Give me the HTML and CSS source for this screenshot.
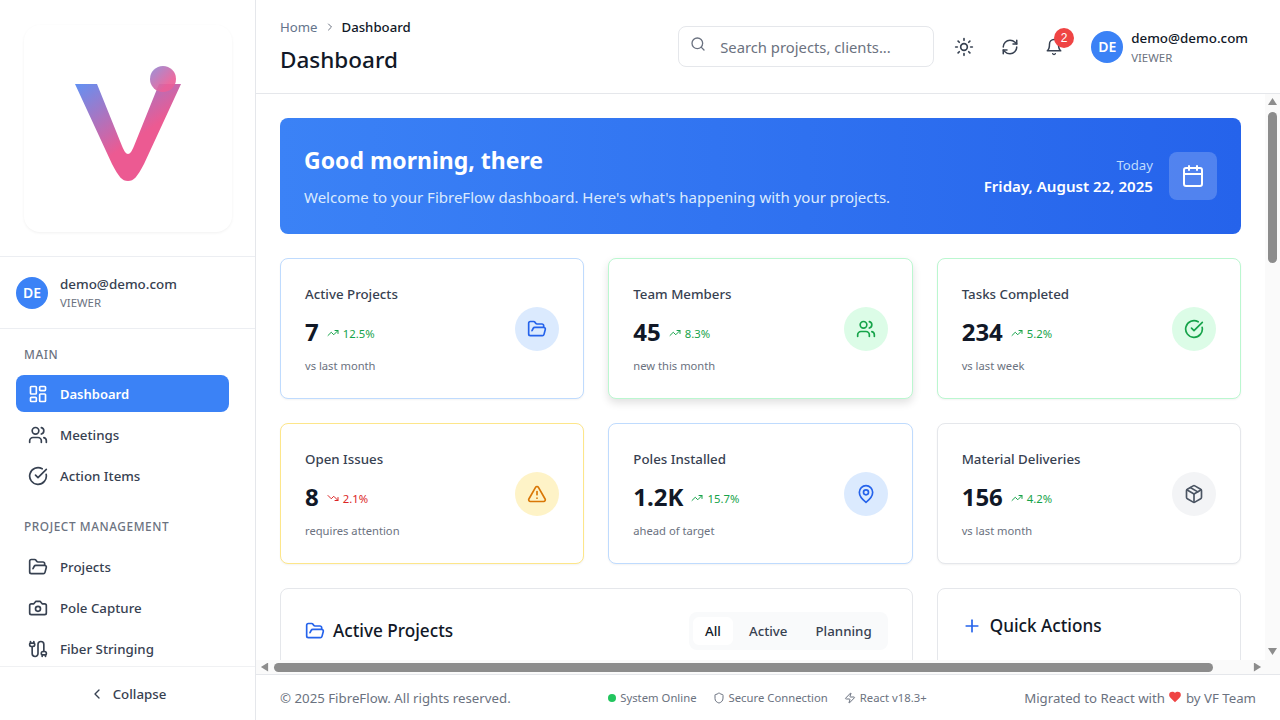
FILE: index.html
```html
<!DOCTYPE html>
<html lang="en">
<head>
    <meta charset="UTF-8">
    <meta name="viewport" content="width=device-width, initial-scale=1.0">
    <title>FibreFlow - Dashboard</title>
    <link rel="stylesheet" href="styles.css">
</head>
<body>
    <!-- iconos -->
    <svg class="sprite" xmlns="http://www.w3.org/2000/svg">
        <symbol id="i-dashboard" viewBox="0 0 24 24"><rect x="3" y="3" width="7" height="9" rx="1"/><rect x="14" y="3" width="7" height="5" rx="1"/><rect x="14" y="12" width="7" height="9" rx="1"/><rect x="3" y="16" width="7" height="5" rx="1"/></symbol>
        <symbol id="i-users" viewBox="0 0 24 24"><path d="M16 21v-2a4 4 0 0 0-4-4H6a4 4 0 0 0-4 4v2"/><circle cx="9" cy="7" r="4"/><path d="M22 21v-2a4 4 0 0 0-3-3.87"/><path d="M16 3.13a4 4 0 0 1 0 7.75"/></symbol>
        <symbol id="i-check" viewBox="0 0 24 24"><path d="M21.801 10A10 10 0 1 1 17 3.335"/><path d="m9 11 3 3L22 4"/></symbol>
        <symbol id="i-folder" viewBox="0 0 24 24"><path d="m6 14 1.5-2.9A2 2 0 0 1 9.24 10H20a2 2 0 0 1 1.94 2.5l-1.54 6a2 2 0 0 1-1.95 1.5H4a2 2 0 0 1-2-2V5a2 2 0 0 1 2-2h3.9a2 2 0 0 1 1.69.9l.81 1.2a2 2 0 0 0 1.67.9H18a2 2 0 0 1 2 2v2"/></symbol>
        <symbol id="i-camera" viewBox="0 0 24 24"><path d="M14.5 4h-5L7 7H4a2 2 0 0 0-2 2v9a2 2 0 0 0 2 2h16a2 2 0 0 0 2-2V9a2 2 0 0 0-2-2h-3l-2.5-3z"/><circle cx="12" cy="13" r="3"/></symbol>
        <symbol id="i-cable" viewBox="0 0 24 24"><path d="M17 21v-2a1 1 0 0 1-1-1v-1a2 2 0 0 1 2-2h2a2 2 0 0 1 2 2v1a1 1 0 0 1-1 1"/><path d="M19 15V6.5a1 1 0 0 0-7 0v11a1 1 0 0 1-7 0V9"/><path d="M21 21v-2h-4"/><path d="M3 5h4V3"/><path d="M7 5a1 1 0 0 1 1 1v1a2 2 0 0 1-2 2H4a2 2 0 0 1-2-2V6a1 1 0 0 1 1-1V3"/></symbol>
        <symbol id="i-chevron" viewBox="0 0 24 24"><path d="m15 18-6-6 6-6"/></symbol>
        <symbol id="i-search" viewBox="0 0 24 24"><path d="m21 21-4.3-4.3"/><circle cx="11" cy="11" r="8"/></symbol>
        <symbol id="i-sun" viewBox="0 0 24 24"><circle cx="12" cy="12" r="4"/><path d="M12 2v2"/><path d="M12 20v2"/><path d="m4.93 4.93 1.41 1.41"/><path d="m17.66 17.66 1.41 1.41"/><path d="M2 12h2"/><path d="M20 12h2"/><path d="m6.34 17.66-1.41 1.41"/><path d="m19.07 4.93-1.41 1.41"/></symbol>
        <symbol id="i-refresh" viewBox="0 0 24 24"><path d="M3 12a9 9 0 0 1 9-9 9.75 9.75 0 0 1 6.74 2.74L21 8"/><path d="M21 3v5h-5"/><path d="M21 12a9 9 0 0 1-9 9 9.75 9.75 0 0 1-6.74-2.74L3 16"/><path d="M8 16H3v5"/></symbol>
        <symbol id="i-bell" viewBox="0 0 24 24"><path d="M6 8a6 6 0 0 1 12 0c0 7 3 9 3 9H3s3-2 3-9"/><path d="M10.3 21a1.94 1.94 0 0 0 3.4 0"/></symbol>
        <symbol id="i-up" viewBox="0 0 24 24"><polyline points="22 7 13.5 15.5 8.5 10.5 2 17"/><polyline points="16 7 22 7 22 13"/></symbol>
        <symbol id="i-down" viewBox="0 0 24 24"><polyline points="22 17 13.5 8.5 8.5 13.5 2 7"/><polyline points="16 17 22 17 22 11"/></symbol>
        <symbol id="i-alert" viewBox="0 0 24 24"><path d="m21.73 18-8-14a2 2 0 0 0-3.48 0l-8 14A2 2 0 0 0 4 21h16a2 2 0 0 0 1.73-3"/><path d="M12 9v4"/><path d="M12 17h.01"/></symbol>
        <symbol id="i-pin" viewBox="0 0 24 24"><path d="M20 10c0 6-8 12-8 12s-8-6-8-12a8 8 0 0 1 16 0Z"/><circle cx="12" cy="10" r="3"/></symbol>
        <symbol id="i-package" viewBox="0 0 24 24"><path d="m7.5 4.27 9 5.15"/><path d="M21 8a2 2 0 0 0-1-1.73l-7-4a2 2 0 0 0-2 0l-7 4A2 2 0 0 0 3 8v8a2 2 0 0 0 1 1.73l7 4a2 2 0 0 0 2 0l7-4A2 2 0 0 0 21 16Z"/><path d="m3.3 7 8.7 5 8.7-5"/><path d="M12 22V12"/></symbol>
        <symbol id="i-calendar" viewBox="0 0 24 24"><path d="M8 2v4"/><path d="M16 2v4"/><rect x="3" y="4" width="18" height="18" rx="2"/><path d="M3 10h18"/></symbol>
        <symbol id="i-plus" viewBox="0 0 24 24"><path d="M5 12h14"/><path d="M12 5v14"/></symbol>
        <symbol id="i-shield" viewBox="0 0 24 24"><path d="M20 13c0 5-3.5 7.5-7.66 8.95a1 1 0 0 1-.67-.01C7.5 20.5 4 18 4 13V6a1 1 0 0 1 1-1c2 0 4.5-1.2 6.24-2.72a1.17 1.17 0 0 1 1.52 0C14.51 3.81 17 5 19 5a1 1 0 0 1 1 1z"/></symbol>
        <symbol id="i-zap" viewBox="0 0 24 24"><path d="M4 14a1 1 0 0 1-.78-1.63l9.9-10.2a.5.5 0 0 1 .86.46l-1.92 6.02A1 1 0 0 0 13 10h7a1 1 0 0 1 .78 1.63l-9.9 10.2a.5.5 0 0 1-.86-.46l1.92-6.02A1 1 0 0 0 11 14z"/></symbol>
        <symbol id="i-heart" viewBox="0 0 24 24"><path d="M19 14c1.49-1.46 3-3.21 3-5.5A5.5 5.5 0 0 0 16.500 3c-1.760 0-3 .5-4.500 2-1.500-1.500-2.740-2-4.500-2A5.500 5.500 0 0 0 2 8.500c0 2.300 1.500 4.050 3 5.500l7 7Z"/></symbol>
    </svg>

    <div class="app">
        <aside class="sidebar">
            <div class="logo-area">
                <div class="logo-card">
                    <svg class="logo" viewBox="0 0 208 208" xmlns="http://www.w3.org/2000/svg">
                        <defs>
                            <linearGradient id="logo-grad" gradientUnits="userSpaceOnUse" x1="56" y1="58" x2="100" y2="122">
                                <stop offset="0" stop-color="#6590f1"/>
                                <stop offset="1" stop-color="#ec5a92"/>
                            </linearGradient>
                            <linearGradient id="dot-grad" x1="0" y1="0" x2="1" y2="1">
                                <stop offset="0" stop-color="#8d8bd8"/>
                                <stop offset="0.7" stop-color="#ea5f98"/>
                            </linearGradient>
                        </defs>
                        <path fill="url(#logo-grad)" d="M51 59H73L98 121C100 126 102 129 104 129C106 129 108 126 110 121L135 59H157L120 139C113 152 110 156 104 156C98 156 95 152 88 139Z"/>
                        <circle cx="139" cy="54" r="13" fill="url(#dot-grad)" opacity="0.92"/>
                    </svg>
                </div>
            </div>

            <div class="side-user">
                <div class="avatar">DE</div>
                <div class="user-text">
                    <div class="user-name">demo@demo.com</div>
                    <div class="user-role">VIEWER</div>
                </div>
            </div>

            <nav class="side-nav">
                <div class="nav-title">MAIN</div>
                <a class="nav-item active"><svg class="ico"><use href="#i-dashboard"/></svg>Dashboard</a>
                <a class="nav-item"><svg class="ico"><use href="#i-users"/></svg>Meetings</a>
                <a class="nav-item"><svg class="ico"><use href="#i-check"/></svg>Action Items</a>

                <div class="nav-title second">PROJECT MANAGEMENT</div>
                <a class="nav-item"><svg class="ico"><use href="#i-folder"/></svg>Projects</a>
                <a class="nav-item"><svg class="ico"><use href="#i-camera"/></svg>Pole Capture</a>
                <a class="nav-item"><svg class="ico"><use href="#i-cable"/></svg>Fiber Stringing</a>
            </nav>

            <div class="collapse-row">
                <svg class="ico-sm"><use href="#i-chevron"/></svg>
                <span>Collapse</span>
            </div>
        </aside>

        <div class="main">
            <header class="topbar">
                <div class="page-head">
                    <div class="crumbs">
                        <span class="crumb-link">Home</span>
                        <svg class="crumb-sep"><use href="#i-chevron"/></svg>
                        <span class="crumb-now">Dashboard</span>
                    </div>
                    <h1>Dashboard</h1>
                </div>
                <div class="top-actions">
                    <div class="search">
                        <svg class="search-ico"><use href="#i-search"/></svg>
                        <span>Search projects, clients...</span>
                    </div>
                    <button class="icon-btn"><svg class="ico"><use href="#i-sun"/></svg></button>
                    <button class="icon-btn small"><svg class="ico"><use href="#i-refresh"/></svg></button>
                    <button class="icon-btn small">
                        <svg class="ico"><use href="#i-bell"/></svg>
                        <span class="badge">2</span>
                    </button>
                    <div class="top-user">
                        <div class="avatar">DE</div>
                        <div class="user-text">
                            <div class="user-name dark">demo@demo.com</div>
                            <div class="user-role">VIEWER</div>
                        </div>
                    </div>
                </div>
            </header>

            <div class="scroll-frame">
                <div class="content">
                    <section class="banner">
                        <div>
                            <h2>Good morning, there</h2>
                            <p>Welcome to your FibreFlow dashboard. Here's what's happening with your projects.</p>
                        </div>
                        <div class="banner-right">
                            <div class="banner-date">
                                <div class="today">Today</div>
                                <div class="date">Friday, August 22, 2025</div>
                            </div>
                            <div class="banner-ico"><svg class="ico-lg"><use href="#i-calendar"/></svg></div>
                        </div>
                    </section>

                    <section class="grid">
                        <div class="card blue">
                            <div class="card-text">
                                <div class="card-title">Active Projects</div>
                                <div class="card-value"><strong>7</strong><span class="trend up"><svg class="ico-xs"><use href="#i-up"/></svg>12.5%</span></div>
                                <div class="card-sub">vs last month</div>
                            </div>
                            <div class="card-ico"><svg class="ico"><use href="#i-folder"/></svg></div>
                        </div>
                        <div class="card green raised">
                            <div class="card-text">
                                <div class="card-title">Team Members</div>
                                <div class="card-value"><strong>45</strong><span class="trend up"><svg class="ico-xs"><use href="#i-up"/></svg>8.3%</span></div>
                                <div class="card-sub">new this month</div>
                            </div>
                            <div class="card-ico"><svg class="ico"><use href="#i-users"/></svg></div>
                        </div>
                        <div class="card green">
                            <div class="card-text">
                                <div class="card-title">Tasks Completed</div>
                                <div class="card-value"><strong>234</strong><span class="trend up"><svg class="ico-xs"><use href="#i-up"/></svg>5.2%</span></div>
                                <div class="card-sub">vs last week</div>
                            </div>
                            <div class="card-ico"><svg class="ico"><use href="#i-check"/></svg></div>
                        </div>
                        <div class="card amber">
                            <div class="card-text">
                                <div class="card-title">Open Issues</div>
                                <div class="card-value"><strong>8</strong><span class="trend down"><svg class="ico-xs"><use href="#i-down"/></svg>2.1%</span></div>
                                <div class="card-sub">requires attention</div>
                            </div>
                            <div class="card-ico"><svg class="ico"><use href="#i-alert"/></svg></div>
                        </div>
                        <div class="card blue">
                            <div class="card-text">
                                <div class="card-title">Poles Installed</div>
                                <div class="card-value"><strong>1.2K</strong><span class="trend up"><svg class="ico-xs"><use href="#i-up"/></svg>15.7%</span></div>
                                <div class="card-sub">ahead of target</div>
                            </div>
                            <div class="card-ico"><svg class="ico"><use href="#i-pin"/></svg></div>
                        </div>
                        <div class="card gray">
                            <div class="card-text">
                                <div class="card-title">Material Deliveries</div>
                                <div class="card-value"><strong>156</strong><span class="trend up"><svg class="ico-xs"><use href="#i-up"/></svg>4.2%</span></div>
                                <div class="card-sub">vs last month</div>
                            </div>
                            <div class="card-ico"><svg class="ico"><use href="#i-package"/></svg></div>
                        </div>

                        <div class="panel wide">
                            <div class="panel-head">
                                <h3><svg class="ico"><use href="#i-folder"/></svg>Active Projects</h3>
                                <div class="tabs">
                                    <span class="tab on">All</span>
                                    <span class="tab">Active</span>
                                    <span class="tab">Planning</span>
                                </div>
                            </div>
                        </div>
                        <div class="panel">
                            <h3><svg class="ico"><use href="#i-plus"/></svg>Quick Actions</h3>
                        </div>
                    </section>
                </div>

                <!-- barras de scroll -->
                <div class="vbar">
                    <span class="arrow arrow-up"></span>
                    <div class="vtrack"><div class="vthumb"></div></div>
                    <span class="arrow arrow-down"></span>
                </div>
                <div class="hbar">
                    <span class="arrow arrow-left"></span>
                    <div class="htrack"><div class="hthumb"></div></div>
                    <span class="arrow arrow-right"></span>
                </div>
                <div class="corner"></div>
            </div>

            <footer class="footer">
                <div>© 2025 FibreFlow. All rights reserved.</div>
                <div class="status">
                    <span class="status-item"><i class="dot"></i>System Online</span>
                    <span class="status-item"><svg class="ico-xs"><use href="#i-shield"/></svg>Secure Connection</span>
                    <span class="status-item"><svg class="ico-xs"><use href="#i-zap"/></svg>React v18.3+</span>
                </div>
                <div class="made">Migrated to React with <svg class="heart"><use href="#i-heart"/></svg> by VF Team</div>
            </footer>
        </div>
    </div>
</body>
</html>
```

FILE: styles.css
```css
* {
    box-sizing: border-box;
}

body {
    margin: 0;
    font-family: "Noto Sans", "Open Sans", sans-serif;
    color: #111827;
    background-color: #fff;
}

.sprite {
    display: none;
}

.ico, .ico-sm, .ico-xs, .ico-lg, .search-ico, .crumb-sep {
    fill: none;
    stroke: currentColor;
    stroke-width: 2;
    stroke-linecap: round;
    stroke-linejoin: round;
    flex-shrink: 0;
}

.ico { width: 20px; height: 20px; }
.ico-sm { width: 16px; height: 16px; }
.ico-xs { width: 12px; height: 12px; }
.ico-lg { width: 24px; height: 24px; }

.app {
    display: flex;
    width: 1280px;
    height: 720px;
    overflow: hidden;
}

/* Sidebar */
.sidebar {
    width: 256px;
    flex-shrink: 0;
    display: flex;
    flex-direction: column;
    border-right: 1px solid #e5e7eb;
    background-color: #fff;
}

.logo-area {
    height: 257px;
    padding: 25px 23px 24px 24px;
    border-bottom: 1px solid #eceef2;
}

.logo-card {
    width: 208px;
    height: 207px;
    border-radius: 16px;
    box-shadow: 0 1px 3px rgba(0, 0, 0, 0.06);
}

.logo {
    display: block;
    width: 208px;
    height: 208px;
}

.side-user {
    display: flex;
    align-items: center;
    gap: 12px;
    height: 72px;
    padding: 0 16px;
    border-bottom: 1px solid #eceef2;
}

.side-user .user-role {
    margin-top: 1px;
}

.avatar {
    width: 32px;
    height: 32px;
    border-radius: 50%;
    background-color: #3b82f6;
    color: #fff;
    font-size: 14px;
    font-weight: 600;
    display: flex;
    align-items: center;
    justify-content: center;
    flex-shrink: 0;
}

.user-name {
    font-size: 13.4px;
    line-height: 20px;
    font-weight: 500;
    color: #374151;
}

.user-name.dark {
    color: #111827;
}

.user-role {
    font-size: 11.4px;
    line-height: 16px;
    margin-top: 2px;
    color: #6b7280;
}

.side-nav {
    flex: 1;
    min-height: 0;
    overflow: hidden;
    padding: 15px 26px 0 16px;
}

.nav-title {
    font-size: 11.8px;
    line-height: 20px;
    font-weight: 500;
    letter-spacing: 0.05em;
    color: #6b7280;
    padding-left: 8px;
    margin-bottom: 11px;
}

.nav-title.second {
    margin-top: 22px;
    margin-bottom: 12px;
}

.nav-item {
    display: flex;
    align-items: center;
    gap: 12px;
    height: 37px;
    padding: 0 12px;
    margin-bottom: 4px;
    border-radius: 8px;
    font-size: 13.3px;
    font-weight: 500;
    color: #374151;
}

.nav-item.active {
    background-color: #3b82f6;
    color: #fff;
    font-size: 13px;
    font-weight: 600;
}

.collapse-row {
    height: 54px;
    border-top: 1px solid #f0f1f3;
    display: flex;
    align-items: center;
    justify-content: center;
    gap: 8px;
    font-size: 13.3px;
    font-weight: 500;
    color: #374151;
}

/* Cabecera */
.main {
    flex: 1;
    min-width: 0;
    display: flex;
    flex-direction: column;
}

.topbar {
    height: 94px;
    flex-shrink: 0;
    display: flex;
    align-items: center;
    justify-content: space-between;
    padding: 0 32px 0 24px;
    border-bottom: 1px solid #e5e7eb;
}

.crumbs {
    display: flex;
    align-items: center;
    gap: 6px;
    font-size: 13.2px;
    line-height: 20px;
    margin-bottom: 7px;
}

.crumb-link {
    color: #64748b;
}

.crumb-sep {
    width: 12px;
    height: 12px;
    color: #6b7280;
    transform: scaleX(-1);
}

.crumb-now {
    color: #111827;
    font-weight: 500;
}

h1 {
    margin: 0;
    font-size: 22.5px;
    line-height: 32px;
    font-weight: 500;
    color: #111827;
}

.top-actions {
    display: flex;
    align-items: center;
}

.search {
    width: 256px;
    height: 41px;
    display: flex;
    align-items: center;
    gap: 14px;
    padding: 0 11px;
    margin-right: 12px;
    border: 1px solid #e5e7eb;
    border-radius: 8px;
    font-size: 14.8px;
    color: #6b7280;
}

.search-ico {
    width: 16px;
    height: 16px;
    margin-top: -5px;
}

.icon-btn {
    position: relative;
    width: 36px;
    height: 36px;
    margin-right: 9px;
    padding: 0;
    border: none;
    background: none;
    color: #374151;
    display: flex;
    align-items: center;
    justify-content: center;
}

.icon-btn:first-of-type {
    margin-right: 10px;
}

.icon-btn:nth-of-type(2) {
    margin-right: 8px;
}

.icon-btn.small .ico {
    width: 18px;
    height: 18px;
}

.badge {
    position: absolute;
    top: -1px;
    right: -2px;
    width: 20px;
    height: 20px;
    border-radius: 50%;
    background-color: #ef4444;
    color: #fff;
    font-size: 12px;
    line-height: 20px;
    text-align: center;
}

.top-user {
    display: flex;
    align-items: center;
    gap: 8px;
    margin-left: 10px;
}

/* Zona con scroll */
.scroll-frame {
    flex: 1;
    min-height: 0;
    display: grid;
    grid-template-columns: 1fr 15px;
    grid-template-rows: 1fr 14px;
    border-bottom: 1px solid #e5e7eb;
}

.content {
    overflow: hidden;
    padding: 24px;
    min-width: 0;
    min-height: 0;
}

.banner {
    height: 116px;
    padding: 0 24px;
    border-radius: 8px;
    background: linear-gradient(90deg, #3b82f6, #2563eb);
    color: #fff;
    display: flex;
    align-items: center;
    justify-content: space-between;
    margin-bottom: 24px;
}

.banner h2 {
    margin: 0 0 9px;
    font-size: 23px;
    line-height: 32px;
    font-weight: 700;
}

.banner p {
    margin: 0;
    font-size: 15px;
    line-height: 24px;
    color: #dbeafe;
}

.banner-right {
    display: flex;
    align-items: center;
    gap: 16px;
}

.banner-date {
    text-align: right;
    padding-top: 1px;
}

.today {
    font-size: 13.2px;
    line-height: 20px;
    color: #bfdbfe;
}

.date {
    margin-top: -1px;
    font-size: 15.1px;
    line-height: 24px;
    font-weight: 600;
}

.banner-ico {
    width: 48px;
    height: 48px;
    border-radius: 8px;
    background-color: rgba(255, 255, 255, 0.2);
    display: flex;
    align-items: center;
    justify-content: center;
}

.grid {
    display: grid;
    grid-template-columns: repeat(3, 1fr);
    gap: 24px;
}

.card {
    height: 141px;
    padding: 24px;
    border: 1px solid #e5e7eb;
    border-radius: 8px;
    background-color: #fff;
    box-shadow: 0 1px 2px rgba(0, 0, 0, 0.05);
    display: flex;
    align-items: center;
    justify-content: space-between;
}

.card.raised {
    box-shadow: 0 4px 8px rgba(0, 0, 0, 0.12);
}

.card-text {
    align-self: flex-start;
    margin-top: 1px;
}

.card-title {
    font-size: 13.3px;
    line-height: 20px;
    font-weight: 500;
    color: #374151;
}

.card-value {
    display: flex;
    align-items: center;
    gap: 8px;
    margin-top: 12px;
}

.card-value strong {
    font-size: 24px;
    line-height: 32px;
    font-weight: 700;
    color: #111827;
}

.trend {
    display: inline-flex;
    align-items: center;
    gap: 4px;
    margin-top: 2px;
    font-size: 11.3px;
    font-weight: 400;
}

.trend.up { color: #16a34a; }
.trend.down { color: #dc2626; }

.card-sub {
    margin-top: 10px;
    font-size: 11.2px;
    line-height: 16px;
    color: #6b7280;
}

.card-ico {
    width: 44px;
    height: 44px;
    border-radius: 50%;
    display: flex;
    align-items: center;
    justify-content: center;
}

.blue { border-color: #bfdbfe; }
.blue .card-ico { background-color: #dbeafe; color: #2563eb; }
.green { border-color: #bbf7d0; }
.green .card-ico { background-color: #dcfce7; color: #16a34a; }
.amber { border-color: #fde68a; }
.amber .card-ico { background-color: #fef3c7; color: #d97706; }
.gray .card-ico { background-color: #f3f4f6; color: #4b5563; }

.panel {
    min-height: 240px;
    padding: 23px 24px;
    border: 1px solid #e5e7eb;
    border-radius: 8px;
    background-color: #fff;
}

.panel.wide {
    grid-column: span 2;
}

.panel-head {
    display: flex;
    align-items: center;
    justify-content: space-between;
}

.panel h3 {
    margin: 0;
    display: flex;
    align-items: center;
    gap: 8px;
    font-size: 17.2px;
    line-height: 28px;
    font-weight: 500;
    color: #111827;
}

.panel h3 .ico {
    color: #2563eb;
}

.tabs {
    display: flex;
    gap: 4px;
    padding: 5px 4px;
    border-radius: 8px;
    background-color: #f9fafb;
}

.tab {
    height: 28px;
    padding: 0 12px;
    border-radius: 6px;
    font-size: 13.3px;
    line-height: 28px;
    font-weight: 500;
    color: #374151;
}

.tab.on {
    background-color: #fff;
    color: #111827;
}

/* Barras de scroll dibujadas */
.vbar {
    display: flex;
    flex-direction: column;
    align-items: center;
    background-color: #fafafa;
}

.vtrack {
    flex: 1;
    width: 100%;
    padding-top: 3px;
}

.vthumb {
    width: 9px;
    height: 151px;
    margin: 0 auto;
    border-radius: 5px;
    background-color: #8c8c8c;
}

.hbar {
    display: flex;
    align-items: center;
    background-color: #fafafa;
}

.htrack {
    flex: 1;
    height: 100%;
    padding-left: 3px;
    display: flex;
    align-items: center;
}

.hthumb {
    width: 939px;
    height: 9px;
    border-radius: 5px;
    background-color: #8c8c8c;
}

.corner {
    background-color: #fafafa;
}

.arrow {
    width: 15px;
    height: 15px;
    flex-shrink: 0;
    position: relative;
}

.arrow::after {
    content: "";
    position: absolute;
    left: 3px;
    top: 3px;
    width: 9px;
    height: 9px;
    background-color: #8c8c8c;
}

.arrow-up::after { clip-path: polygon(50% 10%, 100% 90%, 0 90%); }
.arrow-down::after { top: 2px; clip-path: polygon(0 10%, 100% 10%, 50% 90%); }
.arrow-left::after { left: 4px; clip-path: polygon(90% 0, 90% 100%, 10% 50%); }
.arrow-right::after { clip-path: polygon(10% 0, 90% 50%, 10% 100%); }

/* Pie */
.footer {
    height: 45px;
    flex-shrink: 0;
    display: flex;
    align-items: center;
    justify-content: space-between;
    padding: 0 24px;
    font-size: 13.25px;
    color: #6b7280;
}

.status {
    display: flex;
    align-items: center;
    gap: 16px;
    font-size: 11.3px;
}

.status-item {
    display: flex;
    align-items: center;
    gap: 4px;
}

.dot {
    width: 8px;
    height: 8px;
    border-radius: 50%;
    background-color: #22c55e;
}

.heart {
    width: 14px;
    height: 14px;
    vertical-align: -1px;
    fill: #ef4444;
}
```
